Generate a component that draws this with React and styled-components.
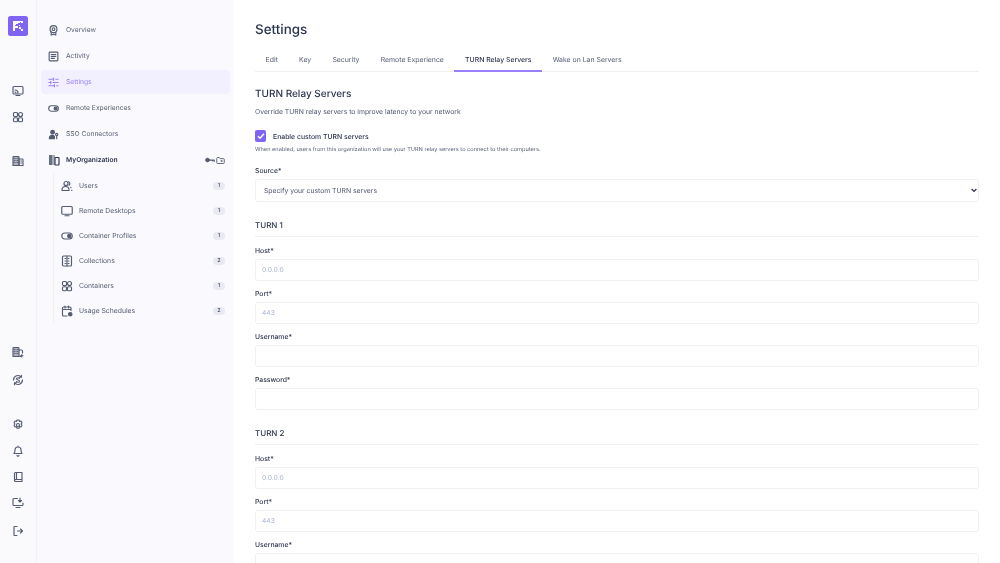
import React from "react";
import styled, { createGlobalStyle } from "styled-components";

const Global = createGlobalStyle`
  html, body { margin: 0; height: 563px; overflow: hidden; background: #fff; }
  body { font-family: Inter, "Liberation Sans", sans-serif; color: #1f2a44; text-rendering: geometricPrecision; -webkit-font-smoothing: antialiased; }
  #root { height: 563px; }
  * { box-sizing: border-box; }
`;

const Page = styled.div`display: flex; height: 563px; overflow: hidden; will-change: opacity; opacity: 0.999;`;
const Rail = styled.nav`
  width: 37px; flex: none; background: #fafafd; border-right: 1px solid #f1f1f6;
  display: flex; flex-direction: column; align-items: center; padding-top: 16px;
`;
const Logo = styled.div`
  width: 20px; height: 20px; border-radius: 2.5px; background: #8064f4;
  display: flex; align-items: center; justify-content: center; margin-bottom: 42px;
`;
const RailButton = styled.div`
  height: 26px; display: flex; align-items: center; justify-content: center; flex: none;
  margin-top: ${(p) => p.$gap || 0}px; color: #555c72;
`;
const Sidebar = styled.aside`
  width: 197px; flex: none; background: rgba(249, 249, 254, 0.85); padding: 18px 4px 0 4px;
  display: flex; flex-direction: column;
`;
const NavItem = styled.div`
  height: 24px; margin-bottom: 2px; border-radius: 4px; display: flex; align-items: center;
  padding-left: 7px; gap: ${(p) => (p.$strong ? 6 : 7)}px; font-size: 6.7px; font-weight: ${(p) => (p.$strong ? 600 : 400)};
  background: ${(p) => (p.$active ? "rgba(124, 90, 255, 0.06)" : "transparent")};
  color: ${(p) => (p.$active ? "#9a80f8" : p.$strong ? "#2c3450" : "#555c72")};
`;
const Spacer = styled.div`flex: 1;`;
const OrgTools = styled.div`display: flex; align-items: center; gap: 1px; margin-right: 5px; color: #555c72;`;
const SubList = styled.div`
  margin: -1px 0 0 12px; border-left: 1px solid #f0f0f5; padding: 0 5px 0 7px;
  display: flex; flex-direction: column;
`;
const SubItem = styled.div`
  height: 25px; display: flex; align-items: center; gap: 6px; font-size: 6.8px; color: #555c72;
`;
const Badge = styled.span`
  min-width: 12px; height: 8px; padding: 0 3.5px; border-radius: 4px; background: #e9e9f1;
  font-size: 5.5px; font-weight: 500; color: #3e455c; display: flex; align-items: center; justify-content: center;
`;
const Main = styled.main`flex: 1; min-width: 0; padding: 21px 21px 0 21px;`;
const Title = styled.h1`margin: 0 0 9px; font-size: 13.4px; line-height: 18px; font-weight: 500; color: #2a3350;`;
const Tabs = styled.div`display: flex; border-bottom: 1px solid #efeff4; height: 24px;`;
const Tab = styled.div`
  padding: 0 10.6px; height: 24px; display: flex; align-items: center; font-size: 6.9px;
  font-weight: ${(p) => (p.$active ? 500 : 400)};
  color: ${(p) => (p.$active ? "#2a3350" : "#555c72")};
  border-bottom: 2px solid ${(p) => (p.$active ? "#9a80f8" : "transparent")};
`;
const Heading = styled.h2`margin: 14px 0 0; font-size: 10px; line-height: 16px; font-weight: 500; color: #2a3350;`;
const Sub = styled.p`margin: 4px 0 0; font-size: 6.8px; line-height: 12px; color: #4f566d;`;
const CheckRow = styled.div`display: flex; align-items: center; gap: 7px; margin-top: 12px;`;
const Box = styled.div`
  width: 11px; height: 12px; border-radius: 2px; background: #8064f4; display: flex;
  align-items: center; justify-content: center;
`;
const CheckLabel = styled.span`font-size: 6.85px; font-weight: 500; color: #2a3350;`;
const Help = styled.p`margin: 4px 0 0; font-size: 5.64px; line-height: 9px; color: #5c637a;`;
const Label = styled.label`display: block; font-size: 6.8px; line-height: 9px; font-weight: 500; color: #2f3750; margin-bottom: 3.5px;`;
const Field = styled.div`margin-top: ${(p) => p.$top ?? 8.5}px;`;
const Input = styled.input`
  display: block; width: 100%; height: 22px; border: 1px solid #f0f0f4; border-radius: 3px;
  padding: 0 6px; background: transparent; font: 400 6.7px Inter, sans-serif; color: #2f3750; outline: none;
  text-rendering: geometricPrecision;
  &::placeholder { color: #a3b2d0; opacity: 1; }
`;
const SelectWrap = styled.div`position: relative;`;
const Select = styled.select`
  display: block; width: 100%; height: 23px; border: 1px solid #f0f0f4; border-radius: 3px;
  padding: 0 8px; background: transparent; font: 400 6.8px Inter, sans-serif; color: #4f566d; outline: none;
  appearance: none; text-rendering: geometricPrecision;
`;
const Arrow = styled.svg`position: absolute; right: 2px; top: 9px; pointer-events: none;`;
const Section = styled.h3`
  margin: ${(p) => p.$top}px 0 0; height: 24px; padding-top: 2px; display: flex; align-items: center;
  font-size: 8px; font-weight: 500; color: #2a3350; border-bottom: 1px solid #f1f1f5;
`;

const Svg = ({ s = 12, w = 1.15, children, view = 24 }) => (
  <svg width={s} height={s} viewBox={`0 0 ${view} ${view}`} fill="none" stroke="currentColor" strokeWidth={w * (view / s)} strokeLinecap="round" strokeLinejoin="round" style={{ flex: "none" }}>
    {children}
  </svg>
);

const I = {
  cast: <><rect x="2" y="3" width="20" height="15" rx="2"/><path d="M8 21h8M6 14a2 2 0 0 1 2 2M6 10a6 6 0 0 1 6 6"/></>,
  shapes: <><circle cx="17" cy="7" r="4"/><rect x="3" y="3" width="8" height="8" rx="2"/><rect x="3" y="13.500" width="8" height="8" rx="2"/><rect x="13" y="13.500" width="8" height="8" rx="2"/></>,
  org: <><path d="M2 21V4.500A1.500 1.500 0 0 1 3.500 3h9A1.500 1.500 0 0 1 14 4.500V21z" fill="currentColor" fillOpacity=".45"/><path d="M14 8h6.500a1.500 1.500 0 0 1 1.500 1.500V21H14z"/><path d="M5 7h1M10 7h1M5 11h1M10 11h1M5 15h1M10 15h1M17.500 12h1.500M17.500 16h1.500" strokeWidth="2.400"/></>,
  orgAdd: <><path d="M2 21V4.500A1.500 1.500 0 0 1 3.500 3h9A1.500 1.500 0 0 1 14 4.500V21z" fill="currentColor" fillOpacity=".45"/><path d="M14 8h5a2 2 0 0 1 2 2v4M14 21h3M5 7h1M10 7h1M5 11h1M10 11h1M5 15h1M10 15h1M19.500 17v5M17 19.500h5"/></>,
  sync: <><path d="M21 12a9 9 0 0 1-16 5.500M3 12A9 9 0 0 1 19 6.500M19 2.500v4h-4M5 21.500v-4h4"/><path d="M15 9c-.5-1-1.500-1.500-3-1.500-2 0-3 1-3 2.200 0 3 6 1.600 6 4.600 0 1.200-1 2.200-3 2.200-1.500 0-2.500-.5-3-1.500"/></>,
  gear: <><path d="M10 2h4l1 3 3-1 2 3.500-2 2.500 2 2.500-2 3.500-3-1-1 3.500h-4l-1-3.500-3 1-2-3.500 2-2.500-2-2.500 2-3.500 3 1z"/><circle cx="12" cy="12" r="3"/></>,
  bell: <><path d="M6 10a6 6 0 0 1 12 0c0 5 2 6 2 7H4c0-1 2-2 2-7zM12 2v2M10 20.500a2 2 0 0 0 4 0"/></>,
  book: <><path d="M5 19V5a2 2 0 0 1 2-2h13v14H7a2 2 0 0 0-2 2 2 2 0 0 0 2 2h13v-4"/><path d="M9 3v14"/></>,
  monDown: <><path d="M11 3H4a2 2 0 0 0-2 2v10a2 2 0 0 0 2 2h16a2 2 0 0 0 2-2v-3M8 21h8M16 2v8M13 7l3 3 3-3"/></>,
  logout: <><path d="M10 3H5a1 1 0 0 0-1 1v16a1 1 0 0 0 1 1h5M11 12h10M17 8l4 4-4 4"/></>,
  award: <><circle cx="12" cy="9" r="7.500"/><circle cx="12" cy="9" r="3"/><path d="M7 16v6l5-2 5 2v-6"/></>,
  note: <><rect x="2.500" y="2.500" width="19" height="19" rx="2"/><path d="M7 8h10M7 12h10M7 16h7"/></>,
  sliders: <><path d="M2 5h10M17 5h5M2 12h4M11 12h11M2 19h12M19 19h3M12 2.500v5M6 9.500v5M14 16.500v5" /></>,
  toggle: <><rect x="1.500" y="6" width="21" height="12" rx="6"/><circle cx="16.500" cy="12" r="3.200" fill="currentColor"/></>,
  sso: <><circle cx="10" cy="7" r="4" fill="currentColor"/><path d="M3 21v-2a6 6 0 0 1 11-3v5z" fill="currentColor"/><circle cx="19" cy="12" r="2.500"/><path d="M19 14.500V21"/></>,
  orgBig: <><rect x="2" y="2" width="6" height="20" fill="currentColor" fillOpacity=".7" stroke="none"/><rect x="8" y="2" width="6" height="20" fill="currentColor" fillOpacity=".4" stroke="none"/><rect x="14" y="7" width="8" height="15" rx="1"/></>,
  key: <><circle cx="6" cy="12" r="4.500" fill="currentColor"/><path d="M10 12h12v3M18 12v2" strokeWidth="3"/></>,
  folder: <><path d="M2 6a2 2 0 0 1 2-2h5l2 3h9a2 2 0 0 1 2 2v9a2 2 0 0 1-2 2H4a2 2 0 0 1-2-2z"/><path d="M14 13.500h2" strokeWidth="4"/></>,
  users: <><circle cx="10" cy="7" r="4"/><path d="M2 21v-1a7 7 0 0 1 14 0v1zM15 3.500a4 4 0 0 1 1 7M19.500 14.500l.5 1M21 20.500h1" /></>,
  monitor: <><rect x="1.500" y="3" width="21" height="15.500" rx="2"/><path d="M8 21.500h8"/></>,
  list: <><rect x="3" y="2" width="18" height="20" rx="2"/><path d="M8 7h1.500M8 12h1.500M8 17h1.500M14.500 7h1.500M14.500 12h1.500M14.500 17h1.500M12 2v20"/></>,
  sched: <><path d="M20 11V6a2 2 0 0 0-2-2H5a2 2 0 0 0-2 2v14a2 2 0 0 0 2 2h7M3 9h17M8 2v4M15 2v4"/><circle cx="18.500" cy="18.500" r="3.500" fill="currentColor"/></>,
};

const nav = [["Overview", I.award], ["Activity", I.note], ["Settings", I.sliders, true], ["Remote Experiences", I.toggle], ["SSO Connectors", I.sso]];
const subs = [["Users", I.users, 1], ["Remote Desktops", I.monitor, 1], ["Container Profiles", I.toggle, 1], ["Collections", I.list, 2], ["Containers", I.shapes, 1], ["Usage Schedules", I.sched, 2]];
const tabs = ["Edit", "Key", "Security", "Remote Experience", "TURN Relay Servers", "Wake on Lan Servers"];

const Turn = ({ title, top, first }) => (
  <>
    <Section $top={top}>{title}</Section>
    <Field $top={9.5}><Label>Host*</Label><Input placeholder="0.0.0.0" /></Field>
    <Field><Label>Port*</Label><Input placeholder="443" /></Field>
    <Field><Label>Username*</Label><Input /></Field>
    {first && <Field><Label>Password*</Label><Input /></Field>}
  </>
);

export default function App() {
  return (
    <Page>
      <Global />
      <Rail>
        <Logo>
          <svg width="12" height="12" viewBox="0 0 12 12" fill="#fff">
            <path d="M1 1h10v2H9V2H8v1H6v1H4v1H3v1h3v2H3v3H1z"/>
            <rect x="7" y="5" width="1" height="1"/><rect x="7" y="7" width="2" height="2"/><rect x="9" y="9" width="2" height="2"/>
          </svg>
        </Logo>
        <RailButton><Svg>{I.cast}</Svg></RailButton>
        <RailButton><Svg>{I.shapes}</Svg></RailButton>
        <RailButton $gap={18}><Svg>{I.org}</Svg></RailButton>
        <RailButton $gap={165}><Svg>{I.orgAdd}</Svg></RailButton>
        <RailButton $gap={2}><Svg>{I.sync}</Svg></RailButton>
        <RailButton $gap={19}><Svg>{I.gear}</Svg></RailButton>
        <RailButton><Svg>{I.bell}</Svg></RailButton>
        <RailButton><Svg>{I.book}</Svg></RailButton>
        <RailButton><Svg>{I.monDown}</Svg></RailButton>
        <RailButton $gap={2}><Svg>{I.logout}</Svg></RailButton>
      </Rail>
      <Sidebar>
        {nav.map(([t, ic, a]) => (
          <NavItem key={t} $active={a}><Svg s={11}>{ic}</Svg>{t}</NavItem>
        ))}
        <NavItem $strong>
          <Svg s={12}>{I.orgBig}</Svg>MyOrganization<Spacer />
          <OrgTools><Svg s={10} w={0.9}>{I.key}</Svg><Svg s={9} w={0.9}>{I.folder}</Svg></OrgTools>
        </NavItem>
        <SubList>
          {subs.map(([t, ic, n]) => (
            <SubItem key={t}><Svg s={12}>{ic}</Svg>{t}<Spacer /><Badge>{n}</Badge></SubItem>
          ))}
        </SubList>
      </Sidebar>
      <Main>
        <Title>Settings</Title>
        <Tabs>{tabs.map((t, i) => <Tab key={t} $active={i === 4}>{t}</Tab>)}</Tabs>
        <Heading>TURN Relay Servers</Heading>
        <Sub>Override TURN relay servers to improve latency to your network</Sub>
        <CheckRow>
          <Box><svg width="8" height="8" viewBox="0 0 8 8" fill="none" stroke="#fff" strokeWidth="1.400"><path d="M1 4.200l2 2 4-4.400"/></svg></Box>
          <CheckLabel>Enable custom TURN servers</CheckLabel>
        </CheckRow>
        <Help>When enabled, users from this organization will use your TURN relay servers to connect to their computers.</Help>
        <Field $top={11}>
          <Label>Source*</Label>
          <SelectWrap>
            <Select defaultValue="c"><option value="c">Specify your custom TURN servers</option></Select>
            <Arrow width="6" height="5" viewBox="0 0 6 5" fill="none" stroke="#2f3750" strokeWidth="1.300"><path d="M.6 1l2.400 2.400L5.400 1"/></Arrow>
          </SelectWrap>
        </Field>
        <Turn title="TURN 1" top={11} first />
        <Turn title="TURN 2" top={11} />
      </Main>
    </Page>
  );
}
